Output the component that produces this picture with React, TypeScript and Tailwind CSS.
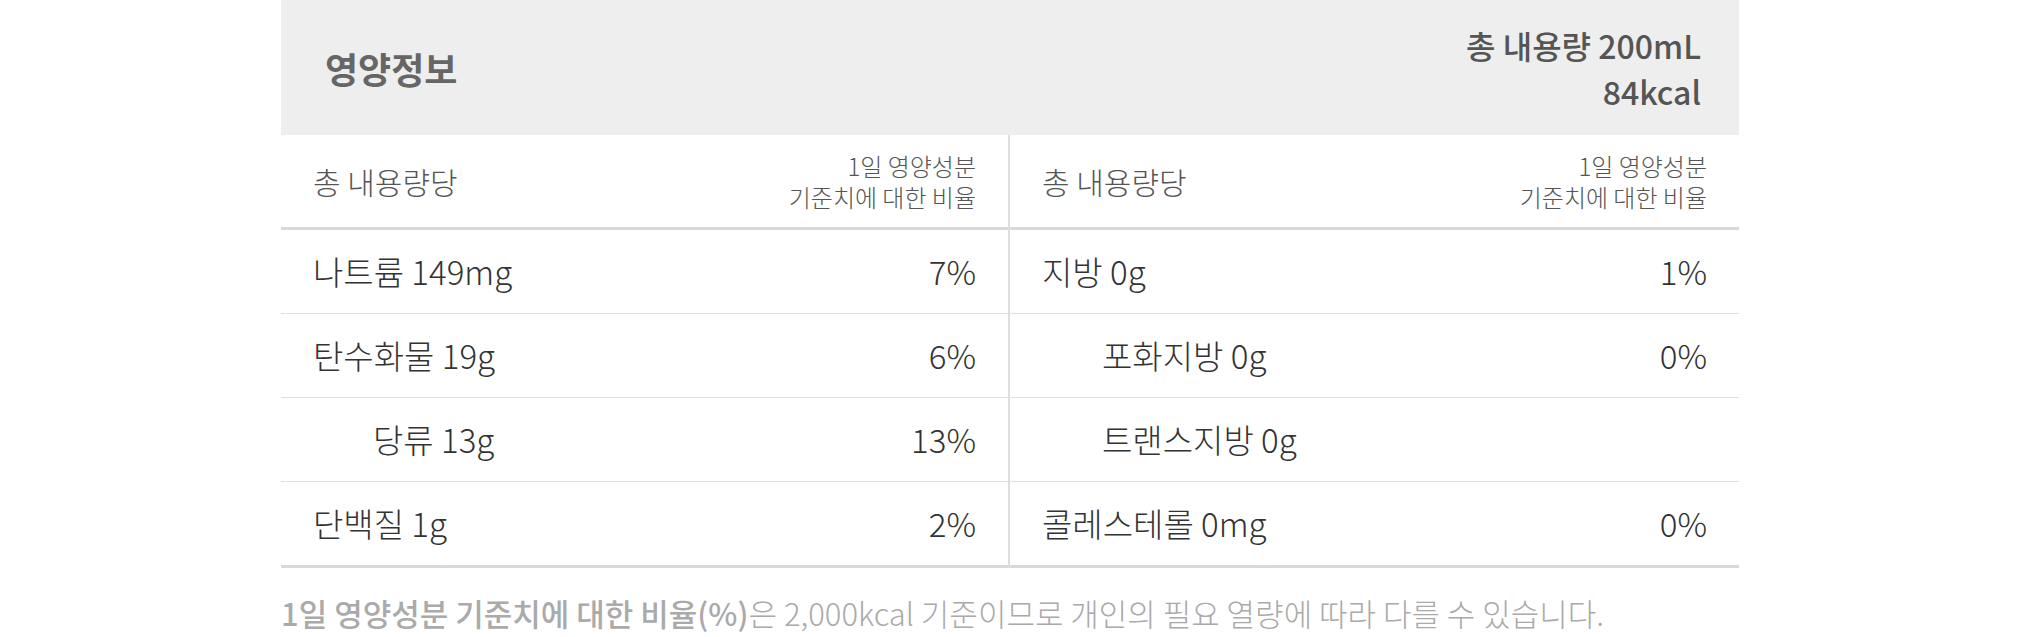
const leftRows = [
  { name: '나트륨 149mg', pct: '7%' },
  { name: '탄수화물 19g', pct: '6%' },
  { name: '당류 13g', pct: '13%', sub: true },
  { name: '단백질 1g', pct: '2%' },
]

const rightRows = [
  { name: '지방 0g', pct: '1%' },
  { name: '포화지방 0g', pct: '0%', sub: true },
  { name: '트랜스지방 0g', pct: '', sub: true },
  { name: '콜레스테롤 0mg', pct: '0%' },
]

type Row = { name: string; pct: string; sub?: boolean }

const Column = ({ rows, divider }: { rows: Row[]; divider?: boolean }) => {
  return (
    <div className={divider ? 'border-r-2 border-[#dedede]' : ''}>
      <div className="flex h-[95px] items-center justify-between border-b-[3px] border-[#d9d9d9] px-[32px]">
        <span className="text-[30px] font-light text-[#555]">총 내용량당</span>
        <span className="text-right text-[24px] leading-[31px] font-light text-[#555]">
          1일 영양성분
          <br />
          기준치에 대한 비율
        </span>
      </div>
      {rows.map((row, i) => (
        <div
          key={row.name}
          className={
            i === rows.length - 1
              ? 'flex h-[86px] items-center justify-between border-b-[3px] border-[#d9d9d9] px-[32px]'
              : 'flex h-[84px] items-center justify-between border-b border-[#e0e0e0] px-[32px]'
          }
        >
          <span className={row.sub ? 'pl-[60px] text-[33px] font-light text-[#333]' : 'text-[33px] font-light text-[#333]'}>
            {row.name}
          </span>
          <span className="text-[33px] font-light text-[#333]">{row.pct}</span>
        </div>
      ))}
    </div>
  )
}

const App = () => {
  return (
    <div className="h-[637px] w-[2020px] bg-white font-['Noto_Sans_CJK_KR','Noto_Sans',sans-serif]">
      <div className="ml-[281px] w-[1458px]">
        <div className="flex h-[135px] items-center justify-between bg-[#eeeeee] pl-[44px] pr-[38px]">
          <h2 className="text-[36px] font-bold text-[#666]">영양정보</h2>
          <div className="text-right text-[32px] leading-[46px] font-medium text-[#555]">
            총 내용량 200mL
            <br />
            84kcal
          </div>
        </div>

        <div className="grid grid-cols-2">
          <Column rows={leftRows} divider />
          <Column rows={rightRows} />
        </div>

        <p className="mt-[24px] text-[31px] leading-[42px] font-light text-[#aaa]">
          <span className="font-medium">1일 영양성분 기준치에 대한 비율(%)</span>은 2,000kcal 기준이므로 개인의 필요
          열량에 따라 다를 수 있습니다.
        </p>
      </div>
    </div>
  )
}

export default App
